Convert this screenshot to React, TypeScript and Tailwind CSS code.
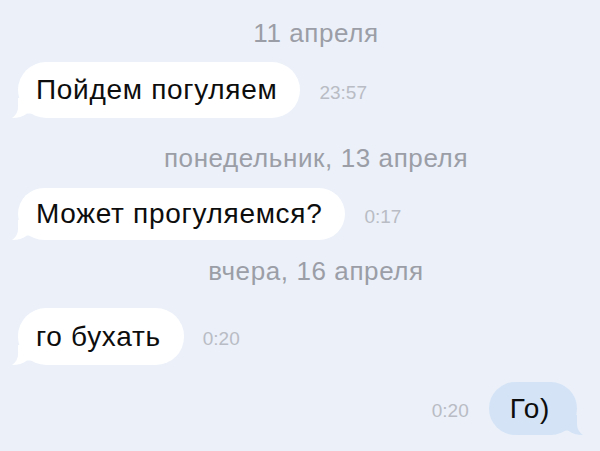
import React from "react";

type Side = "in" | "out";

function Tail({ side, color }: { side: Side; color: string }) {
  if (side === "in") {
    return (
      <svg
        className="absolute -left-[6px] bottom-0"
        width="22"
        height="20"
        viewBox="0 0 22 20"
      >
        <path
          d="M6 0 L6 9 C6 14 3.5 17.5 0 20 C6 20 11 18.5 15 15.5 L22 15.5 L22 0 Z"
          fill={color}
        />
      </svg>
    );
  }
  return (
    <svg
      className="absolute -right-[6px] bottom-0"
      width="22"
      height="20"
      viewBox="0 0 22 20"
    >
      <path
        d="M16 0 L16 9 C16 14 18.5 17.5 22 20 C16 20 11 18.5 7 15.5 L0 15.5 L0 0 Z"
        fill={color}
      />
    </svg>
  );
}

function DateLabel({ text, className }: { text: string; className: string }) {
  return (
    <div
      className={`pl-[32px] text-center text-[26px] leading-[28px] tracking-[0.6px] text-[#9b9ea6] ${className}`}
    >
      {text}
    </div>
  );
}

function Incoming({
  text,
  time,
  className,
}: {
  text: string;
  time: string;
  className: string;
}) {
  return (
    <div className={`flex items-center gap-[19px] pl-[18px] ${className}`}>
      <div className="relative flex h-full items-center rounded-[28px] bg-white pl-[18px] pr-[23px] text-[28px] tracking-[0.7px] text-[#0d0d0d]">
        {text}
        <Tail side="in" color="#ffffff" />
      </div>
      <span className="pt-[6px] text-[19px] text-[#b9bcc4]">{time}</span>
    </div>
  );
}

export default function App() {
  return (
    <div
      className="h-[451px] w-[600px] overflow-hidden bg-[#ebf0f9]"
      style={{ fontFamily: '"Liberation Sans", Arial, sans-serif' }}
    >
      <DateLabel text="11 апреля" className="pt-[19px]" />
      <Incoming text="Пойдем погуляем" time="23:57" className="mt-[15px] h-[56px]" />
      <DateLabel text="понедельник, 13 апреля" className="mt-[26px]" />
      <Incoming text="Может прогуляемся?" time="0:17" className="mt-[16px] h-[52px]" />
      <DateLabel text="вчера, 16 апреля" className="mt-[17px]" />
      <Incoming text="го бухать" time="0:20" className="mt-[23px] h-[57px]" />
      <div className="mt-[17px] flex h-[53px] items-center justify-end gap-[20px] pr-[23px]">
        <span className="pt-[6px] text-[19px] text-[#b9bcc4]">0:20</span>
        <div className="relative flex h-full items-center rounded-[28px] bg-[#d4e3f6] pl-[21px] pr-[27px] text-[28px] tracking-[0.7px] text-[#0d0d0d]">
          Го)
          <Tail side="out" color="#d4e3f6" />
        </div>
      </div>
    </div>
  );
}
